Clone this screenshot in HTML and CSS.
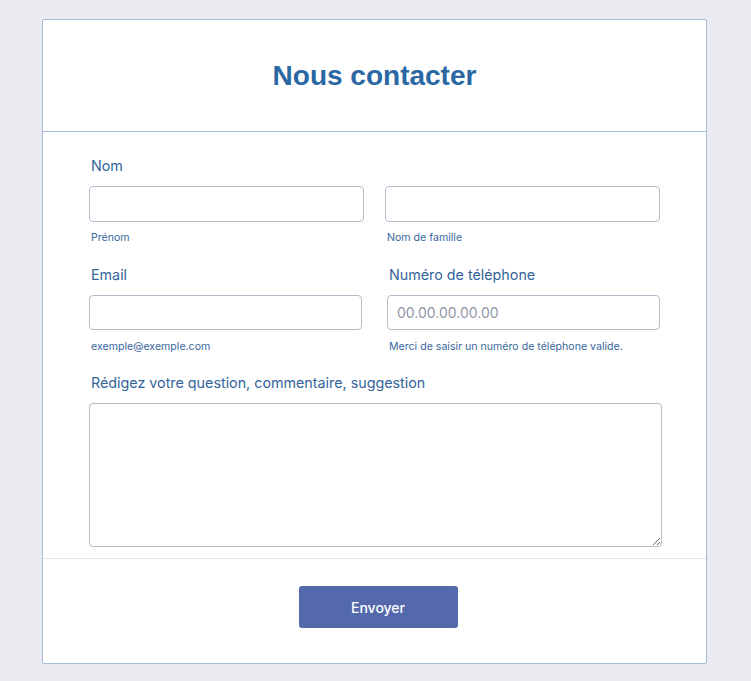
FILE: index.html
```html
<!DOCTYPE html>
<html lang="fr">
<head>
<meta charset="utf-8">
<title>Nous contacter</title>
<link rel="stylesheet" href="styles.css">
</head>
<body>
<form class="card">
  <div class="card-header">
    <h1 class="title">Nous contacter</h1>
  </div>
  <div class="card-body">
    <div class="field">
      <label class="label">Nom</label>
      <div class="row row-name">
        <div class="col">
          <input class="input" type="text">
          <span class="sub">Prénom</span>
        </div>
        <div class="col">
          <input class="input" type="text">
          <span class="sub">Nom de famille</span>
        </div>
      </div>
    </div>
    <div class="row row-contact">
      <div class="col">
        <label class="label">Email</label>
        <input class="input input-sm" type="text">
        <span class="sub">exemple@exemple.com</span>
      </div>
      <div class="col">
        <label class="label">Numéro de téléphone</label>
        <input class="input input-sm" type="text" placeholder="00.00.00.00.00">
        <span class="sub">Merci de saisir un numéro de téléphone valide.</span>
      </div>
    </div>
    <div class="field">
      <label class="label">Rédigez votre question, commentaire, suggestion</label>
      <textarea class="textarea"></textarea>
    </div>
  </div>
  <div class="card-footer">
    <button class="btn" type="button">Envoyer</button>
  </div>
</form>
</body>
</html>
```
FILE: styles.css
```css
* { box-sizing: border-box; }
html, body { margin: 0; padding: 0; }
body {
  background: #eaebf0;
  font-family: Inter, "Noto Sans", sans-serif;
  padding: 19px 0 18px 42px;
}
.card {
  width: 665px;
  background: #fff;
  border: 1px solid #a3bdd8;
  border-radius: 2px;
  display: flex;
  flex-direction: column;
}
.card-header {
  height: 112px;
  border-bottom: 1px solid #a3bdd8;
  display: flex;
  align-items: center;
  justify-content: center;
}
.title {
  margin: 0;
  font-family: "Liberation Sans", Arial, sans-serif;
  font-weight: bold;
  font-size: 28px;
  color: #2a67a3;
  padding-top: 1px;
}
.card-body {
  padding: 24px 0 11px 46px;
  display: flex;
  flex-direction: column;
}
.field { display: flex; flex-direction: column; }
.label {
  display: block;
  font-size: 14.3px;
  line-height: 20px;
  color: #33649b;
  padding-left: 2px;
  margin-bottom: 10px;
  font-weight: 400;
}
.row { display: flex; }
.row-name { gap: 21px; width: 571px; }
.row-name .col { width: 275px; }
.row-contact { gap: 25px; width: 571px; margin-top: 19px; }
.row-contact .col { width: 273px; }
.col { display: flex; flex-direction: column; }
.input {
  display: block;
  width: 100%;
  height: 36px;
  border: 1px solid #b7bac8;
  border-radius: 4px;
  background: #fff;
  font-family: Inter, "Noto Sans", sans-serif;
  font-size: 14px;
  padding: 0 9px;
  margin: 0;
  color: #333;
  outline: none;
}
.input-sm { height: 35px; }
.input::placeholder { color: #8f97a8; }
.sub {
  font-size: 10.6px;
  line-height: 16px;
  color: #3a679d;
  padding-left: 2px;
  margin-top: 8px;
}
.row-contact .sub { margin-top: 9px; }
.row-contact + .field { margin-top: 18px; }
.textarea {
  display: block;
  width: 573px;
  height: 144px;
  border: 1px solid #b7bac8;
  border-radius: 4px;
  margin: 0;
  font-family: Inter, "Noto Sans", sans-serif;
  outline: none;
}
.card-footer {
  border-top: 1px solid #e3e3ef;
  padding: 27px 0 35px 7px;
  display: flex;
  justify-content: center;
}
.btn {
  width: 159px;
  height: 42px;
  background: #5369ab;
  color: #fff;
  border: none;
  border-radius: 3px;
  font-family: Inter, "Noto Sans", sans-serif;
  font-size: 14px;
  font-weight: 500;
}
```
